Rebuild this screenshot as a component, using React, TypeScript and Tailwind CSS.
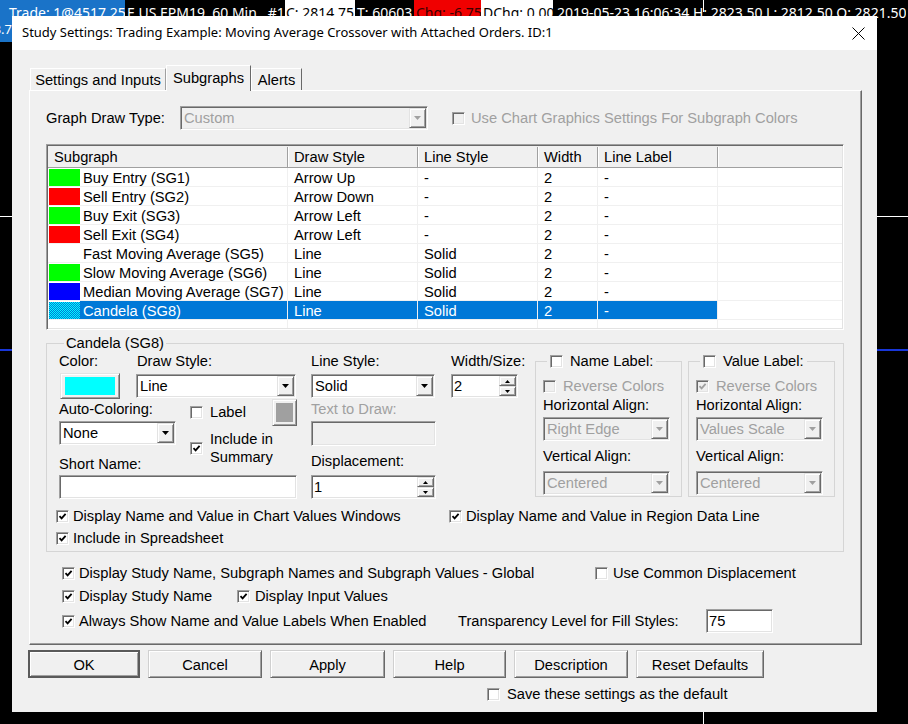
import React from 'react'

const sunken =
  'border border-[#a0a0a0] border-r-white border-b-white shadow-[inset_1px_1px_0_#696969,inset_-1px_-1px_0_#e3e3e3]'
const raised =
  'border border-[#e3e3e3] border-r-[#696969] border-b-[#696969] shadow-[inset_1px_1px_0_#fff,inset_-1px_-1px_0_#a0a0a0] bg-[#f0f0f0]'

interface SubgraphRow {
  name: string
  color: string | null
  draw: string
  line: string
  selected?: boolean
}

const rows: SubgraphRow[] = [
  { name: 'Buy Entry (SG1)', color: '#00ff00', draw: 'Arrow Up', line: '-' },
  { name: 'Sell Entry (SG2)', color: '#ff0000', draw: 'Arrow Down', line: '-' },
  { name: 'Buy Exit (SG3)', color: '#00ff00', draw: 'Arrow Left', line: '-' },
  { name: 'Sell Exit (SG4)', color: '#ff0000', draw: 'Arrow Left', line: '-' },
  { name: 'Fast Moving Average (SG5)', color: null, draw: 'Line', line: 'Solid' },
  { name: 'Slow Moving Average (SG6)', color: '#00ff00', draw: 'Line', line: 'Solid' },
  { name: 'Median Moving Average (SG7)', color: '#0000ff', draw: 'Line', line: 'Solid' },
  { name: 'Candela (SG8)', color: '#00ffff', draw: 'Line', line: 'Solid', selected: true },
]

function Check({ checked, disabled }: { checked?: boolean; disabled?: boolean }) {
  return (
    <span
      className={`flex h-[13px] w-[13px] shrink-0 items-center justify-center ${sunken} ${
        disabled ? 'bg-[#f0f0f0]' : 'bg-white'
      }`}
    >
      {checked && (
        <svg width="9" height="9" viewBox="0 0 9 9">
          <path
            d="M1.5 4.2 L3.6 6.4 L7.6 1.8"
            fill="none"
            stroke={disabled ? '#a0a0a0' : '#000'}
            strokeWidth="1.8"
          />
        </svg>
      )}
    </span>
  )
}

function CheckRow({
  checked,
  disabled,
  children,
  className = '',
}: {
  checked?: boolean
  disabled?: boolean
  children: React.ReactNode
  className?: string
}) {
  return (
    <div className={`flex h-[17px] items-center ${className}`}>
      <Check checked={checked} disabled={disabled} />
      <span className={`whitespace-nowrap pl-[4px] ${disabled ? 'text-[#a0a0a0]' : ''}`}>{children}</span>
    </div>
  )
}

function DownArrow({ disabled }: { disabled?: boolean }) {
  return (
    <svg width="7" height="4" viewBox="0 0 7 4">
      <path d="M0 0 H7 L3.5 4 Z" fill={disabled ? '#a0a0a0' : '#000'} />
    </svg>
  )
}

function Combo({ value, className = '', disabled }: { value: string; className?: string; disabled?: boolean }) {
  return (
    <div
      className={`flex items-stretch p-[1px] ${sunken} ${
        disabled ? 'bg-[#f0f0f0] text-[#a0a0a0]' : 'bg-white'
      } ${className}`}
    >
      <span className="flex flex-1 items-center truncate pl-[2px] pt-[1px]">{value}</span>
      <span className={`flex w-[17px] items-center justify-center ${raised}`}>
        <DownArrow disabled={disabled} />
      </span>
    </div>
  )
}

function Spin({ value, className = '' }: { value: string; className?: string }) {
  return (
    <div className={`flex items-stretch bg-white p-[1px] ${sunken} ${className}`}>
      <span className="flex flex-1 items-center pl-[1px] pt-[1px]">{value}</span>
      <div className="flex w-[17px] flex-col">
        <span className={`flex flex-1 items-center justify-center ${raised}`}>
          <svg width="5" height="3" viewBox="0 0 5 3">
            <path d="M2.5 0 L5 3 H0 Z" fill="#000" />
          </svg>
        </span>
        <span className={`flex flex-1 items-center justify-center ${raised}`}>
          <svg width="5" height="3" viewBox="0 0 5 3">
            <path d="M0 0 H5 L2.5 3 Z" fill="#000" />
          </svg>
        </span>
      </div>
    </div>
  )
}

function PushButton({ children, className = '', isDefault }: { children: React.ReactNode; className?: string; isDefault?: boolean }) {
  return (
    <div
      className={`flex h-[28px] items-center justify-center bg-[#f0f0f0] pt-[2px] ${
        isDefault
          ? 'border-2 border-[#5a5a5a] shadow-[inset_1px_1px_0_#fff,inset_-1px_-1px_0_#a0a0a0]'
          : 'border border-[#d0d0d0] border-r-[#696969] border-b-[#696969] shadow-[inset_1px_1px_0_#fff,inset_-1px_-1px_0_#a0a0a0]'
      } ${className}`}
    >
      {children}
    </div>
  )
}

function LabelGroup({ title, reverse, hAlign }: { title: string; reverse: boolean; hAlign: string }) {
  return (
    <fieldset className="w-[147px] border border-[#d5d5d5] pb-[1px] pl-[7px]">
      <legend className="ml-[4px] px-[3px]">
        <span className="flex h-[17px] items-center gap-[7px]">
          <Check />
          {title}
        </span>
      </legend>
      <div className="mt-[8px] flex h-[17px] items-center gap-[7px] text-[#a0a0a0]">
        <Check checked={reverse} disabled />
        Reverse Colors
      </div>
      <div className="mt-[2px] leading-[17px]">Horizontal Align:</div>
      <Combo value={hAlign} disabled className="mt-[3px] h-[24px] w-[127px]" />
      <div className="mt-[7px] leading-[17px]">Vertical Align:</div>
      <Combo value="Centered" disabled className="mt-[6px] h-[24px] w-[127px]" />
    </fieldset>
  )
}

function SubgraphList() {
  return (
    <div className={`mt-[14px] flex h-[186px] w-[798px] flex-col overflow-hidden bg-white p-[1px] ${sunken}`}>
      <div className="flex h-[22px] shrink-0 border-b border-[#a0a0a0] bg-[#f0f0f0] pt-[1px]">
        <div className="flex w-[240px] items-center border-r border-[#a0a0a0] pl-[6px]">Subgraph</div>
        <div className="flex w-[130px] items-center border-r border-[#a0a0a0] pl-[6px] shadow-[inset_1px_0_0_#fff]">Draw Style</div>
        <div className="flex w-[120px] items-center border-r border-[#a0a0a0] pl-[6px] shadow-[inset_1px_0_0_#fff]">Line Style</div>
        <div className="flex w-[60px] items-center border-r border-[#a0a0a0] pl-[6px] shadow-[inset_1px_0_0_#fff]">Width</div>
        <div className="flex w-[120px] items-center border-r border-[#a0a0a0] pl-[6px] shadow-[inset_1px_0_0_#fff]">Line Label</div>
        <div className="flex-1 shadow-[inset_1px_0_0_#fff]" />
      </div>
      {rows.map((r) => {
        const cell = r.selected ? 'bg-[#0078d7] text-white' : ''
        return (
          <div key={r.name} className="flex h-[19px] shrink-0 border-b border-[#f0f0f0]">
            <div className="flex w-[240px] items-center border-r border-[#f0f0f0] pl-[1px]">
              {r.selected ? (
                <svg width="31" height="17" className="shrink-0">
                  <defs>
                    <pattern id="dither" width="2" height="2" patternUnits="userSpaceOnUse">
                      <rect width="2" height="2" fill="#00ffff" />
                      <rect width="1" height="1" fill="#0078d7" />
                      <rect x="1" y="1" width="1" height="1" fill="#0078d7" />
                    </pattern>
                  </defs>
                  <rect width="31" height="17" fill="url(#dither)" />
                </svg>
              ) : (
                <div className="h-[17px] w-[31px] shrink-0" style={{ backgroundColor: r.color ?? 'transparent' }} />
              )}
              <span className={`flex h-full flex-1 items-center whitespace-nowrap pl-[3px] pt-[2px] ${cell}`}>{r.name}</span>
            </div>
            <div className={`flex w-[130px] items-center border-r border-[#f0f0f0] pl-[6px] pt-[2px] ${cell}`}>{r.draw}</div>
            <div className={`flex w-[120px] items-center border-r border-[#f0f0f0] pl-[6px] pt-[2px] ${cell}`}>{r.line}</div>
            <div className={`flex w-[60px] items-center border-r border-[#f0f0f0] pl-[6px] pt-[2px] ${cell}`}>2</div>
            <div className={`flex w-[120px] items-center border-r border-[#f0f0f0] pl-[6px] pt-[2px] ${cell}`}>-</div>
            <div className="flex-1" />
          </div>
        )
      })}
      <div className="flex flex-1">
        <div className="w-[240px] border-r border-[#f0f0f0]" />
        <div className="w-[130px] border-r border-[#f0f0f0]" />
        <div className="w-[120px] border-r border-[#f0f0f0]" />
        <div className="w-[60px] border-r border-[#f0f0f0]" />
        <div className="w-[120px] border-r border-[#f0f0f0]" />
      </div>
    </div>
  )
}

function SubgraphPanel() {
  return (
    <div className="h-[555px] w-[833px] border border-white border-r-[#696969] border-b-[#696969] pl-[16px] pt-[15px] shadow-[inset_-1px_-1px_0_#a0a0a0]">
      <div className="flex h-[24px] items-center">
        <span className="w-[134px] pt-[1px]">Graph Draw Type:</span>
        <Combo value="Custom" disabled className="h-[24px] w-[248px]" />
        <CheckRow disabled className="ml-[24px] [&>span:last-child]:pl-[6px]">
          Use Chart Graphics Settings For Subgraph Colors
        </CheckRow>
      </div>

      <SubgraphList />

      <fieldset className="mt-[5px] w-[798px] border border-[#d5d5d5] pb-[4px] pl-[9px]">
        <legend className="ml-[8px] px-[2px] leading-[17px]">Candela (SG8)</legend>
        <div className="ml-[3px] mt-[1px] flex items-start">
          <div className="flex w-[238px] flex-col">
            <div className="flex">
              <div className="w-[77px]">
                <div className="leading-[17px]">Color:</div>
                <div className={`ml-[1px] mt-[3px] flex h-[26px] w-[60px] items-center justify-center ${raised}`}>
                  <div className="h-[18px] w-[50px] bg-[#00ffff]" />
                </div>
              </div>
              <div>
                <div className="ml-[1px] leading-[17px]">Draw Style:</div>
                <Combo value="Line" className="mt-[4px] h-[24px] w-[160px]" />
              </div>
            </div>
            <div className="flex h-[76px]">
              <div className="w-[131px]">
                <div className="mt-[2px] leading-[17px]">Auto-Coloring:</div>
                <Combo value="None" className="mt-[3px] h-[24px] w-[117px]" />
                <div className="mt-[11px] leading-[17px]">Short Name:</div>
              </div>
              <div className="flex w-[107px] flex-col">
                <div className="flex h-[27px] items-center">
                  <Check />
                  <span className="ml-[7px]">Label</span>
                  <div className={`ml-auto flex h-[27px] w-[25px] items-center justify-center ${raised}`}>
                    <div className="h-[19px] w-[17px] bg-[#a0a0a0]" />
                  </div>
                </div>
                <div className="mt-[4px] flex items-center">
                  <Check checked />
                  <span className="ml-[7px] leading-[18px]">
                    Include in
                    <br />
                    Summary
                  </span>
                </div>
              </div>
            </div>
            <div className={`h-[24px] w-[238px] bg-white ${sunken}`} />
          </div>

          <div className="ml-[14px] w-[125px]">
            <div className="leading-[17px]">Line Style:</div>
            <Combo value="Solid" className="mt-[4px] h-[24px] w-[124px]" />
            <div className="mt-[3px] leading-[17px] text-[#a0a0a0]">Text to Draw:</div>
            <div className={`mt-[3px] h-[25px] w-[125px] bg-[#f0f0f0] ${sunken}`} />
            <div className="mt-[7px] leading-[17px]">Displacement:</div>
            <Spin value="1" className="mt-[5px] h-[24px] w-[125px]" />
          </div>

          <div className="ml-[15px] w-[67px]">
            <div className="whitespace-nowrap leading-[17px]">Width/Size:</div>
            <Spin value="2" className="mt-[4px] h-[24px] w-[67px]" />
          </div>

          <div className="ml-[17px]">
            <LabelGroup title="Name Label:" reverse={false} hAlign="Right Edge" />
          </div>
          <div className="ml-[6px]">
            <LabelGroup title="Value Label:" reverse hAlign="Values Scale" />
          </div>
        </div>

        <div className="mt-[9px] flex items-center">
          <CheckRow checked className="w-[393px]">
            Display Name and Value in Chart Values Windows
          </CheckRow>
          <CheckRow checked>Display Name and Value in Region Data Line</CheckRow>
        </div>
        <CheckRow checked className="mt-[5px]">
          Include in Spreadsheet
        </CheckRow>
      </fieldset>

      <div className="ml-[16px] mt-[13px] flex items-center">
        <CheckRow checked className="w-[533px]">
          Display Study Name, Subgraph Names and Subgraph Values - Global
        </CheckRow>
        <CheckRow className="[&>span:last-child]:pl-[5px]">Use Common Displacement</CheckRow>
      </div>
      <div className="ml-[16px] mt-[6px] flex items-center">
        <CheckRow checked className="w-[175px]">
          Display Study Name
        </CheckRow>
        <CheckRow checked className="[&>span:last-child]:pl-[5px]">
          Display Input Values
        </CheckRow>
      </div>
      <div className="ml-[16px] mt-[4px] flex h-[24px] items-center">
        <CheckRow checked className="w-[396px]">
          Always Show Name and Value Labels When Enabled
        </CheckRow>
        <span className="w-[248px]">Transparency Level for Fill Styles:</span>
        <div className={`flex h-[24px] w-[67px] items-center bg-white pl-[2px] pt-[1px] ${sunken}`}>75</div>
      </div>
    </div>
  )
}

function ChartBackdrop() {
  return (
    <>
      <div className="flex h-[26px] w-full whitespace-pre font-['Noto_Sans',sans-serif] text-[14px] leading-[26px] text-white">
        <span className="w-[125px] shrink-0 overflow-hidden bg-[#1a73c8] pl-[9px]">Trade: 1@4517.25</span>
        <span className="w-[160px] shrink-0 overflow-hidden pl-[2px]">E US EPM19  60 Min   #1</span>
        <span className="w-[70px] shrink-0 overflow-hidden bg-white pl-[1px] text-black">C: 2814.75</span>
        <span className="w-[59px] shrink-0 overflow-hidden pl-[2px]">T: 60603</span>
        <span className="w-[67px] shrink-0 overflow-hidden bg-[#f00000] pl-[2px] text-[#3a0000]">Chg: -6.75</span>
        <span className="w-[72px] shrink-0 overflow-hidden bg-white pl-[2px] text-black">DChg: 0.00</span>
        <span className="overflow-hidden pl-[4px]">2019-05-23 16:06:34 H: 2823.50 L: 2812.50 O: 2821.50</span>
      </div>
      <div className="absolute left-0 top-[17px] flex h-[25px] w-[12px] items-center justify-end overflow-hidden bg-[#1a73c8] font-['Noto_Sans',sans-serif] text-[13px] text-white">
        <span className="whitespace-nowrap">3.7</span>
      </div>
      <div className="absolute left-0 top-[216px] h-px w-full bg-white" />
      <div className="absolute left-0 top-[349px] h-[2px] w-full bg-[#1836d8]" />
      <div className="absolute left-[703px] top-0 h-[12px] w-px bg-white" />
      <div className="absolute left-[703px] top-[712px] h-[12px] w-px bg-white" />
    </>
  )
}

export default function App() {
  return (
    <div className="relative h-[724px] w-[908px] overflow-hidden bg-black">
      <ChartBackdrop />

      <div className="absolute left-[12px] top-[16px] flex h-[696px] w-[865px] flex-col bg-[#f0f0f0] font-['Liberation_Sans',Arial,sans-serif] text-[14.7px] text-black">
        <div className="flex h-[34px] shrink-0 items-center justify-between bg-white pl-[10px] pr-[12px] font-['Noto_Sans',sans-serif] text-[13px]">
          <span>Study Settings: Trading Example: Moving Average Crossover with Attached Orders. ID:1</span>
          <svg width="13" height="13" viewBox="0 0 13 13">
            <path d="M0.5 0.5 L12.5 12.5 M12.5 0.5 L0.5 12.5" stroke="#000" strokeWidth="1" />
          </svg>
        </div>

        <div className="flex flex-col pl-[17px] pt-[15px]">
          <div className="flex h-[25px] items-end">
            <div className="ml-[1px] flex h-[22px] w-[136px] items-center justify-center border border-white border-r-[#a0a0a0] border-b-0 pt-[2px]">
              Settings and Inputs
            </div>
            <div className="relative z-10 -mb-px flex h-[26px] w-[85px] items-center justify-center border border-white border-r-[#696969] border-b-0 bg-[#f0f0f0]">
              Subgraphs
            </div>
            <div className="flex h-[22px] w-[51px] items-center justify-center border border-white border-r-[#696969] border-b-0 pt-[2px]">
              Alerts
            </div>
          </div>
          <SubgraphPanel />
        </div>

        <div className="ml-[16px] mt-[5px] flex gap-[8px]">
          <PushButton isDefault className="w-[112px]">OK</PushButton>
          <PushButton className="w-[114px]">Cancel</PushButton>
          <PushButton className="w-[115px]">Apply</PushButton>
          <PushButton className="w-[113px]">Help</PushButton>
          <PushButton className="w-[114px]">Description</PushButton>
          <PushButton className="w-[128px]">Reset Defaults</PushButton>
        </div>

        <div className="ml-[475px] mt-[8px] flex h-[17px] items-center">
          <Check />
          <span className="pl-[7px]">Save these settings as the default</span>
        </div>
      </div>
    </div>
  )
}
